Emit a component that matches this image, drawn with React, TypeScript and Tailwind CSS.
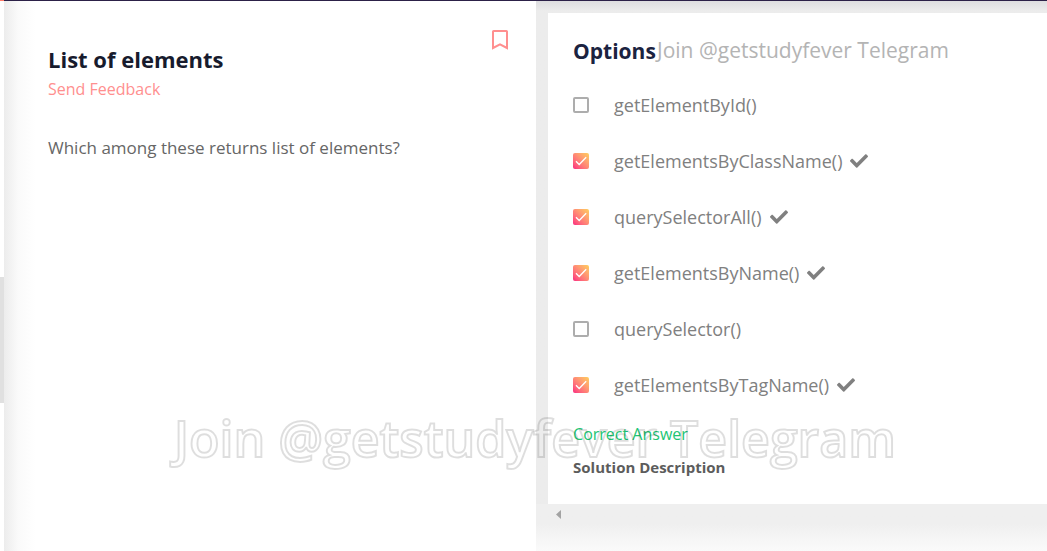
import { useState } from "react";

type Option = { label: string; correct: boolean; chosen: boolean };

const initialOptions: Option[] = [
  { label: "getElementById()", correct: false, chosen: false },
  { label: "getElementsByClassName()", correct: true, chosen: true },
  { label: "querySelectorAll()", correct: true, chosen: true },
  { label: "getElementsByName()", correct: true, chosen: true },
  { label: "querySelector()", correct: false, chosen: false },
  { label: "getElementsByTagName()", correct: true, chosen: true },
];

function BookmarkIcon() {
  return (
    <svg viewBox="0 0 16 20" className="h-5 w-4" fill="none" stroke="currentColor" strokeWidth="2" aria-hidden="true">
      <path d="M1 1.6Q1 1 1.6 1H14.4Q15 1 15 1.6V18L8 14.4L1 18Z" />
    </svg>
  );
}

function CorrectMark() {
  return (
    <svg viewBox="0 0 512 512" className="size-[18px] text-[#808080]" fill="currentColor" aria-hidden="true">
      <path d="M173.898 439.404l-166.4-166.4c-9.997-9.997-9.997-26.206 0-36.204l36.203-36.204c9.997-9.998 26.207-9.998 36.204 0L192 312.69 432.095 72.596c9.997-9.997 26.207-9.997 36.204 0l36.203 36.204c9.997 9.997 9.997 26.206 0 36.204l-294.4 294.401c-9.998 9.997-26.207 9.997-36.204-.001z" />
    </svg>
  );
}

function OptionRow({ option, onToggle }: { option: Option; onToggle: () => void }) {
  return (
    <li className="flex h-14 items-center">
      <label className="flex items-center text-lg leading-6 text-[#808080]">
        <span className="mr-[25px] grid size-4 place-items-center">
          <input
            type="checkbox"
            checked={option.chosen}
            onChange={onToggle}
            className="peer col-start-1 row-start-1 size-4 appearance-none rounded-xs border-2 border-[#adadad] bg-white checked:border-0 checked:bg-linear-to-tr checked:from-[#f9227f] checked:to-[#ffcf5c]"
          />
          <svg
            viewBox="0 0 16 16"
            className="pointer-events-none col-start-1 row-start-1 hidden size-4 peer-checked:block"
            fill="none"
            stroke="white"
            strokeWidth="1.3"
            aria-hidden="true"
          >
            <path d="M3 8.2L6.2 11.5L13.2 4.2" />
          </svg>
        </span>
        {option.label}
      </label>
      {option.correct && (
        <span className="ml-2">
          <CorrectMark />
        </span>
      )}
    </li>
  );
}

export default function App() {
  const [options, setOptions] = useState(initialOptions);
  const toggle = (index: number) =>
    setOptions(options.map((o, i) => (i === index ? { ...o, chosen: !o.chosen } : o)));

  return (
    <div className="relative flex min-h-screen flex-col overflow-hidden bg-white font-['Open_Sans',sans-serif]">
      <header className="flex h-px bg-[#2c2148]">
        <div className="w-1 bg-[#ff7a68]" />
      </header>
      <main className="flex flex-1">
        <section className="flex w-[51.2%] shrink-0">
          <div className="w-1 shrink-0 bg-white pt-[276px]">
            <div className="h-[126px] bg-[#e0e0e0]" />
          </div>
          <div className="flex flex-1 items-start justify-between bg-linear-to-r from-[#ececec] via-[#fafafa] via-[14px] to-white to-[32px] pt-7 pr-7 pl-11">
            <div>
              <h1 className="pt-[14px] text-[22px] leading-8 font-bold text-[#171b2d]">List of elements</h1>
              <a href="#feedback" className="mt-0.5 block text-base leading-6 text-[#ff8f8f]">
                Send Feedback
              </a>
              <p className="mt-[35px] text-[17px] leading-6 text-[#666666]">
                Which among these returns list of elements?
              </p>
            </div>
            <button type="button" aria-label="Bookmark" className="mt-px text-[#ff8f8f]">
              <BookmarkIcon />
            </button>
          </div>
        </section>
        <section className="flex min-w-0 flex-1 flex-col bg-linear-to-b from-[#dedee0] via-[#ececec] via-[10px] to-[#ececec] pt-3">
          <div className="ml-3 bg-white px-[25px] pt-[22px] pb-[25px]">
            <h2 className="text-[21px] leading-8 font-bold text-[#1b2340]">Options</h2>
            <ul className="mt-[10px]">
              {options.map((option, index) => (
                <OptionRow key={option.label} option={option} onToggle={() => toggle(index)} />
              ))}
            </ul>
            <p className="mt-[9px] text-base leading-6 text-[#22c573]">Correct Answer</p>
            <h3 className="mt-[9px] text-[15px] leading-6 font-bold text-[#5c5c5c]">Solution Description</h3>
          </div>
          <div className="flex-1 bg-linear-to-b from-[#efefef] from-[20px] via-[#f5f5f5] via-[33px] to-[#fafafa]">
            <div className="ml-3 flex h-5 items-center pl-2">
              <svg viewBox="0 0 5 9" className="h-[9px] w-[5px]" fill="#a3a3a3" aria-hidden="true">
                <path d="M5 0V9L0 4.5Z" />
              </svg>
            </div>
          </div>
        </section>
      </main>
      <p className="pointer-events-none absolute top-9 left-[657px] text-[21px] leading-7 font-medium whitespace-nowrap text-[#b4b4b4]">
        Join @getstudyfever Telegram
      </p>
      <p className="pointer-events-none absolute top-[408px] left-[174px] text-[50px] leading-[60px] font-semibold whitespace-nowrap text-transparent [-webkit-text-stroke:2px_rgba(0,0,0,0.13)]">
        Join @getstudyfever Telegram
      </p>
    </div>
  );
}
